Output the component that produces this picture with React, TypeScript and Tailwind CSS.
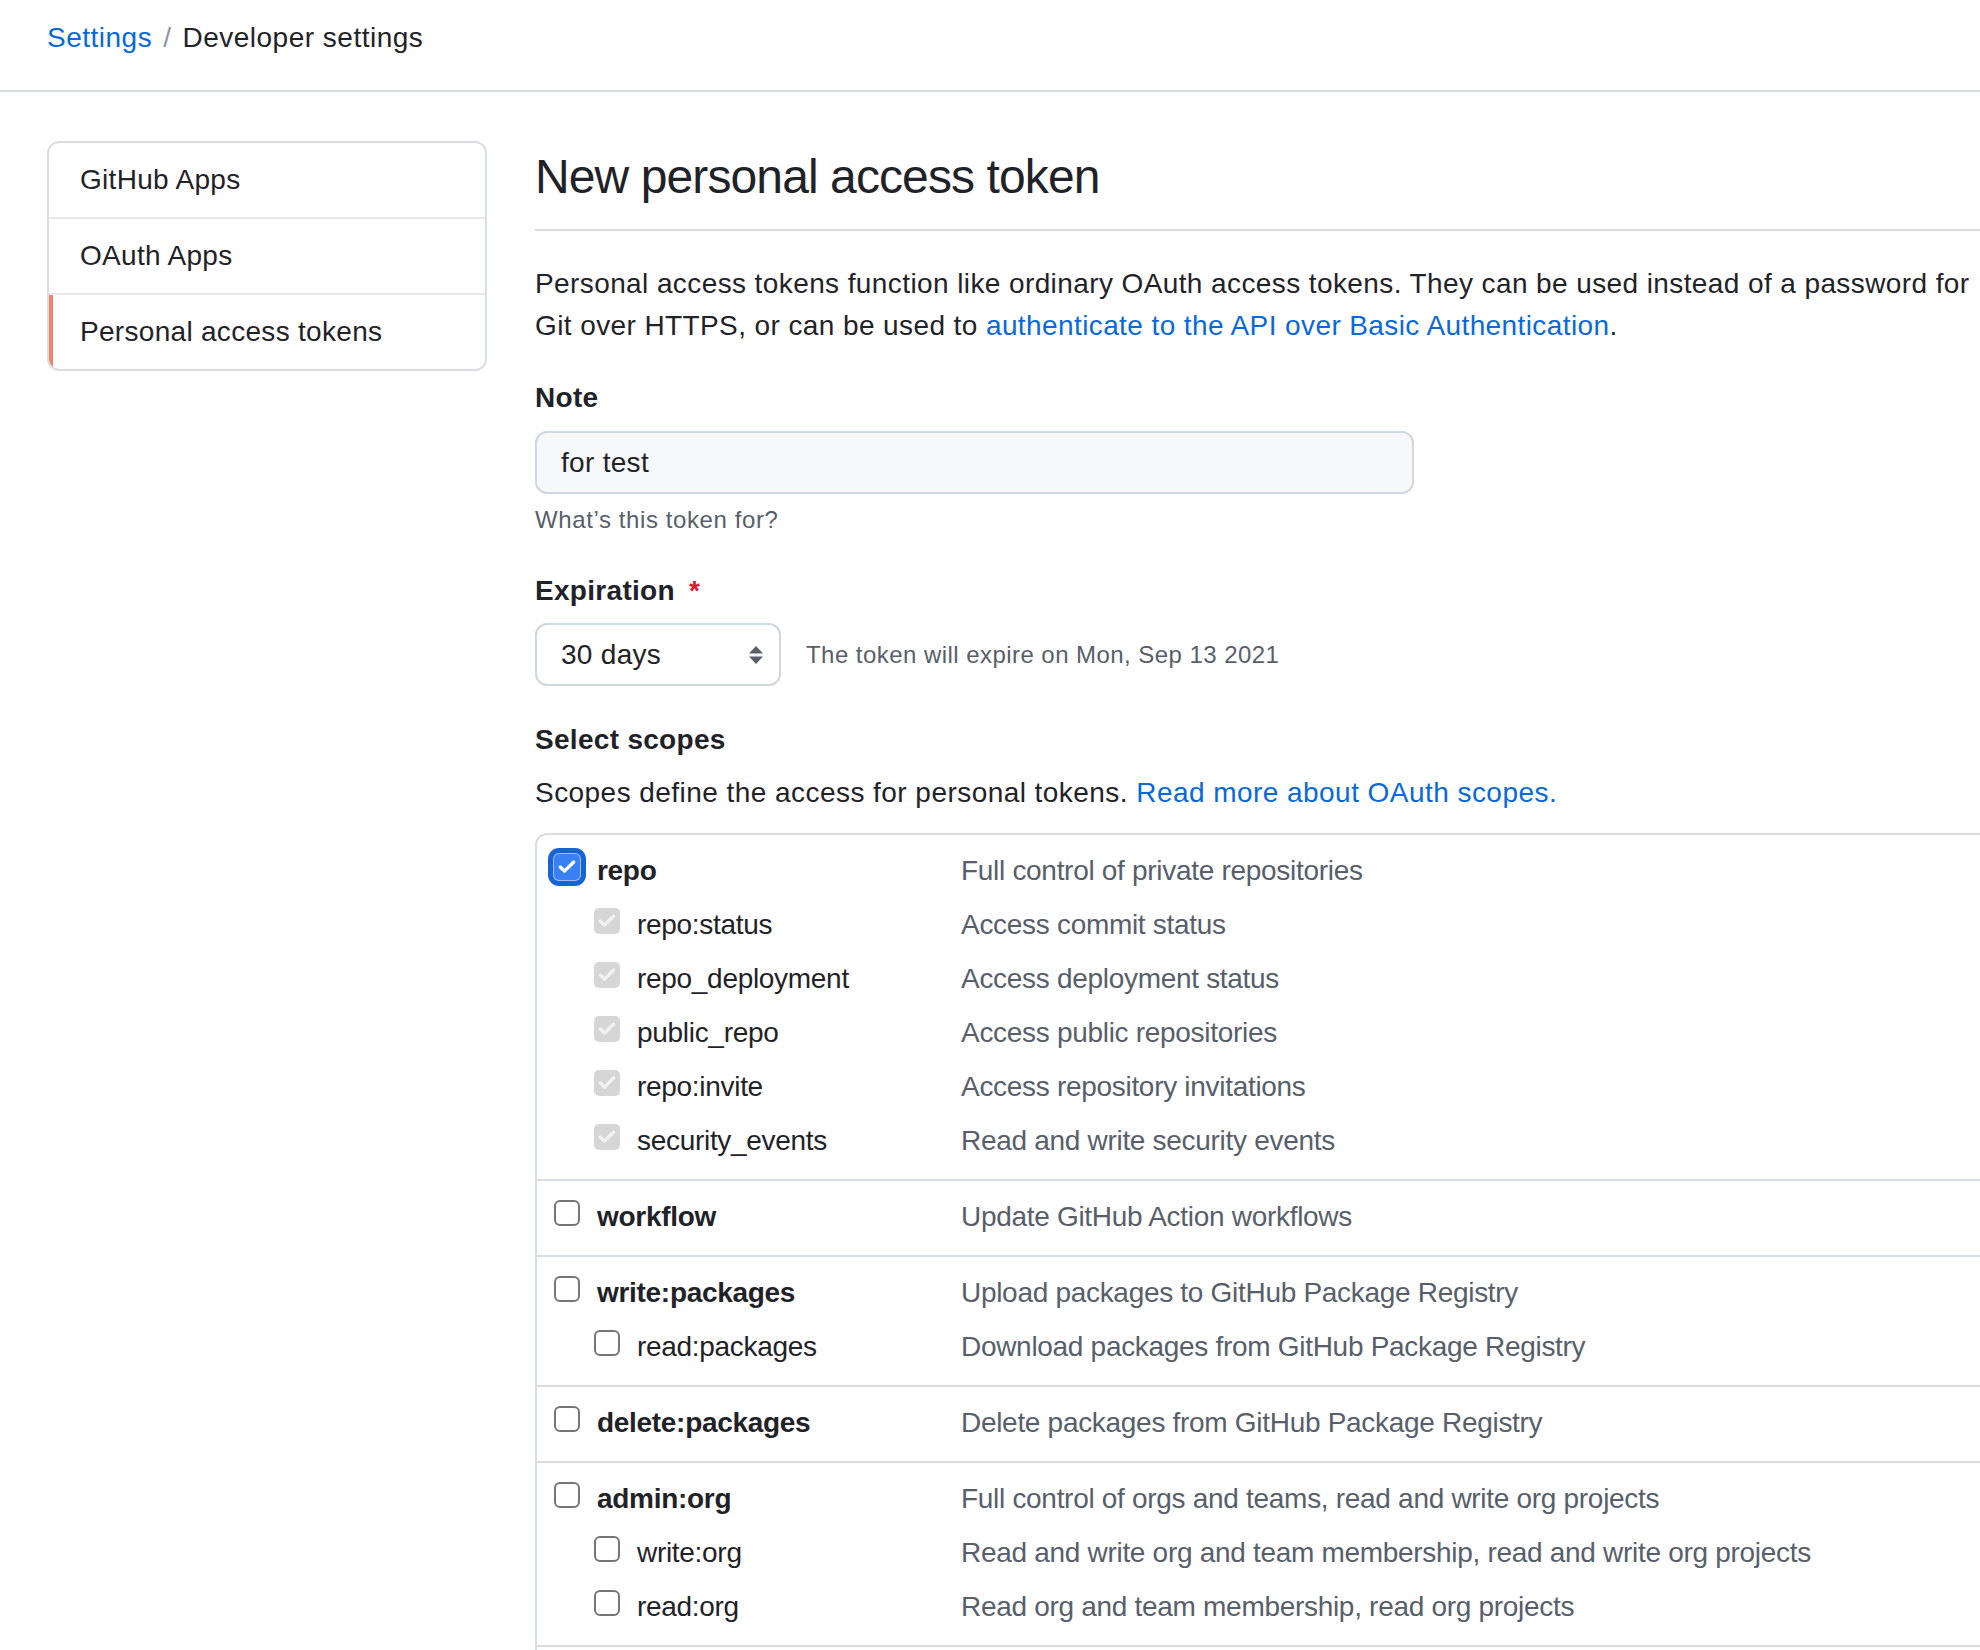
import { Check } from "lucide-react";

type BoxState = "focused" | "disabled" | "off";

interface Scope {
  name: string;
  desc: string;
  sub?: boolean;
  state: BoxState;
}

const groups: Scope[][] = [
  [
    { name: "repo", desc: "Full control of private repositories", state: "focused" },
    { name: "repo:status", desc: "Access commit status", sub: true, state: "disabled" },
    { name: "repo_deployment", desc: "Access deployment status", sub: true, state: "disabled" },
    { name: "public_repo", desc: "Access public repositories", sub: true, state: "disabled" },
    { name: "repo:invite", desc: "Access repository invitations", sub: true, state: "disabled" },
    { name: "security_events", desc: "Read and write security events", sub: true, state: "disabled" },
  ],
  [{ name: "workflow", desc: "Update GitHub Action workflows", state: "off" }],
  [
    { name: "write:packages", desc: "Upload packages to GitHub Package Registry", state: "off" },
    { name: "read:packages", desc: "Download packages from GitHub Package Registry", sub: true, state: "off" },
  ],
  [{ name: "delete:packages", desc: "Delete packages from GitHub Package Registry", state: "off" }],
  [
    { name: "admin:org", desc: "Full control of orgs and teams, read and write org projects", state: "off" },
    { name: "write:org", desc: "Read and write org and team membership, read and write org projects", sub: true, state: "off" },
    { name: "read:org", desc: "Read org and team membership, read org projects", sub: true, state: "off" },
  ],
];

const CheckBox = ({ state }: { state: BoxState }) => {
  if (state === "focused") {
    return (
      <span className="mt-[11px] flex size-[26px] shrink-0 items-center justify-center rounded-[5px] bg-[#3a80f4] shadow-[0_0_0_1px_#9cc1fa,0_0_0_6px_#1764d6]">
        <Check className="size-[20px] text-white" strokeWidth={4} />
      </span>
    );
  }
  if (state === "disabled") {
    return (
      <span className="mt-[11px] flex size-[26px] shrink-0 items-center justify-center rounded-[5px] bg-[#d6d6d6]">
        <Check className="size-[20px] text-[#f2f2f2]" strokeWidth={4} />
      </span>
    );
  }
  return <span className="mt-[11px] size-[26px] shrink-0 rounded-[6px] border-2 border-[#767676] bg-white" />;
};

const ScopeRow = ({ scope }: { scope: Scope }) => (
  <div className="flex h-[54px]">
    <div className={`flex w-[424px] shrink-0 ${scope.sub ? "pl-[57px]" : "pl-[17px]"}`}>
      <CheckBox state={scope.state} />
      <span className={`ml-[17px] pt-[1px] leading-[54px] ${scope.sub ? "" : "font-bold"}`}>{scope.name}</span>
    </div>
    <span className="pt-[1px] leading-[54px] text-[#57606a]">{scope.desc}</span>
  </div>
);

export default function App() {
  return (
    <div className="h-[1650px] w-[1980px] overflow-hidden bg-white font-['Liberation_Sans','Arial',sans-serif] text-[28px] tracking-[0.3px] text-[#1f2328]">
      <header className="h-[92px] border-b-2 border-[#d8dee4] pl-[47px] pt-[17px] leading-[42px] tracking-[0.5px]">
        <a className="text-[#0969da]">Settings</a>
        <span className="mx-[11px] text-[#8c959f]">/</span>
        <span>Developer settings</span>
      </header>

      <div className="flex pt-[49px]">
        <aside className="ml-[47px] w-[440px] shrink-0 self-start overflow-hidden rounded-[12px] border-2 border-[#d8dee4]">
          <div className="h-[74px] pl-[31px] leading-[74px]">GitHub Apps</div>
          <div className="h-[76px] border-t-2 border-[#e6e9ec] pl-[31px] leading-[74px]">OAuth Apps</div>
          <div className="relative h-[76px] border-t-2 border-[#e6e9ec] pl-[31px] leading-[74px]">
            <span className="absolute bottom-0 left-0 top-0 w-[4px] bg-[#f0836e]" />
            Personal access tokens
          </div>
        </aside>

        <main className="ml-[48px] w-[1500px] shrink-0">
          <div className="border-b-2 border-[#d8dee4] pb-[22px] pt-[6px]">
            <h1 className="text-[48px] leading-[60px] tracking-[-0.9px]">New personal access token</h1>
          </div>

          <p className="mt-[32px] whitespace-nowrap leading-[42px] tracking-[0.4px]">
            Personal access tokens function like ordinary OAuth access tokens. They can be used instead of a password for
            <br />
            Git over HTTPS, or can be used to{" "}
            <a className="text-[#0969da]">authenticate to the API over Basic Authentication</a>.
          </p>

          <div className="mt-[30px] font-bold leading-[42px]">Note</div>
          <div className="mt-[12px] flex h-[63px] w-[879px] items-center rounded-[12px] border-2 border-[#d0d7de] bg-[#f6f8fa] pl-[24px]">
            for test
          </div>
          <div className="mt-[8px] text-[24px] leading-[36px] tracking-[0.6px] text-[#57606a]">What’s this token for?</div>

          <div className="mt-[32px] font-bold leading-[42px]">
            Expiration <span className="ml-[6px] text-[#cf222e]">*</span>
          </div>
          <div className="mt-[11px] flex items-center">
            <div className="flex h-[63px] w-[246px] items-center justify-between rounded-[12px] border-2 border-[#d0d7de] bg-white pl-[24px] pr-[15px]">
              <span>30 days</span>
              <svg width="16" height="20" viewBox="0 0 16 20" fill="#57606a">
                <path d="M1 8.5 L8 1 L15 8.5 Z" />
                <path d="M1 11.5 L8 19 L15 11.5 Z" />
              </svg>
            </div>
            <span className="ml-[25px] text-[24px] tracking-[0.45px] text-[#57606a]">The token will expire on Mon, Sep 13 2021</span>
          </div>

          <div className="mt-[33px] font-bold leading-[42px]">Select scopes</div>
          <p className="mt-[11px] leading-[42px] tracking-[0.45px]">
            Scopes define the access for personal tokens. <a className="text-[#0969da]">Read more about OAuth scopes.</a>
          </p>

          <div className="mt-[19px] rounded-tl-[12px] border-l-2 border-t-2 border-[#d8dee4] tracking-[-0.3px]">
            {groups.map((group, i) => (
              <div key={i} className={`pb-[12px] pt-[8px] ${i > 0 ? "border-t-2 border-[#d8dee4]" : ""}`}>
                {group.map((scope) => (
                  <ScopeRow key={scope.name} scope={scope} />
                ))}
              </div>
            ))}
            <div className="h-[40px] border-t-2 border-[#d8dee4]" />
          </div>
        </main>
      </div>
    </div>
  );
}
